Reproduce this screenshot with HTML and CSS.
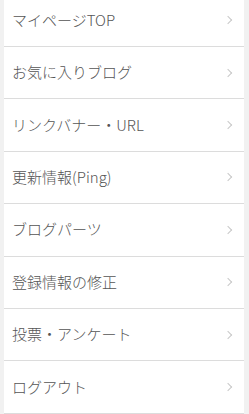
FILE: index.html
```html
<!DOCTYPE html>
<html lang="ja">
<head>
<meta charset="utf-8">
<link rel="stylesheet" href="styles.css">
</head>
<body>
<ul class="menu">
  <li class="item"><span class="label">マイページTOP</span><span class="chev"></span></li>
  <li class="item"><span class="label">お気に入りブログ</span><span class="chev"></span></li>
  <li class="item"><span class="label">リンクバナー・URL</span><span class="chev"></span></li>
  <li class="item"><span class="label">更新情報(Ping)</span><span class="chev"></span></li>
  <li class="item"><span class="label">ブログパーツ</span><span class="chev"></span></li>
  <li class="item"><span class="label">登録情報の修正</span><span class="chev"></span></li>
  <li class="item"><span class="label">投票・アンケート</span><span class="chev"></span></li>
  <li class="item"><span class="label">ログアウト</span><span class="chev"></span></li>
</ul>
</body>
</html>
```
FILE: styles.css
```css
html, body {
  margin: 0;
  padding: 0;
  background: #f1f1f1;
  overflow: hidden;
}
body {
  padding: 0 5px 0 4px;
  font-family: "Noto Sans CJK JP", "Noto Sans", sans-serif;
}
.menu {
  list-style: none;
  margin: -5.4px 0 0 0;
  padding: 0;
  background: #fff;
}
.item {
  display: flex;
  align-items: center;
  justify-content: space-between;
  height: 51.4px;
  border-bottom: 1px solid #dcdcdc;
  padding: 0 13px 0 8px;
}
.label {
  font-size: 15px;
  font-weight: 300;
  color: #555;
  margin-top: -2px;
}
.chev {
  width: 5px;
  height: 5px;
  border-top: 1px solid #c8c8c8;
  border-right: 1px solid #c8c8c8;
  transform: rotate(45deg);
  margin-top: 0;
}
```
